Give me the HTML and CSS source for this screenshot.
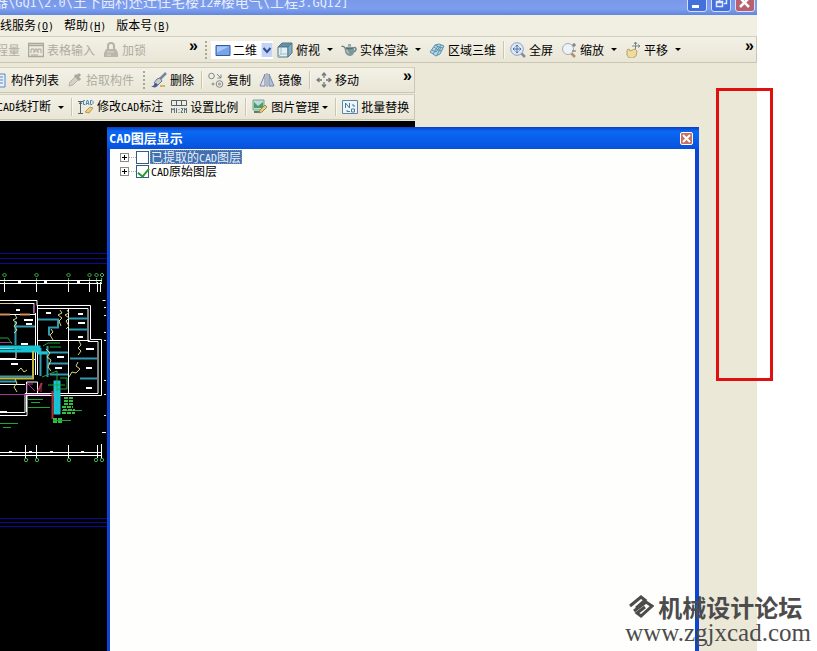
FILE: index.html
```html
<!DOCTYPE html>
<html lang="zh-CN">
<head>
<meta charset="utf-8">
<title>CAD图层显示</title>
<link rel="stylesheet" href="styles.css">
</head>
<body>
<main class="app">
  <header class="titlebar">
    <span class="title-text">器<span class="latin">\GQI\2.0\</span>王下园村还迁住宅楼<span class="latin">12#</span>楼电气<span class="latin">\</span>工程<span class="latin">3.GQI2]</span></span>
    <div class="win-buttons">
      <button class="win" aria-label="最小化"><svg width="18" height="18" viewBox="0 0 18 18"><path d="M4 12h7v3H4z" fill="#fff"/></svg></button>
      <button class="win" aria-label="还原"><svg width="18" height="18" viewBox="0 0 18 18" fill="none" stroke="#dfe8ff"><path d="M7.500 9V4.500h7v6H12M4.500 8.500h6v5h-6zM4 9.500h7" stroke-width="1.500"/></svg></button>
      <button class="win win-close" aria-label="关闭"><svg width="18" height="18" viewBox="0 0 18 18"><path d="M4 5l9 9M13 5l-9 9" stroke="#fff" stroke-width="2.500"/></svg></button>
    </div>
  </header>

  <nav class="menubar">
    <button>线服务<span class="latin">(<u>O</u>)</span></button>
    <button>帮助<span class="latin">(<u>H</u>)</span></button>
    <button>版本号<span class="latin">(<u>B</u>)</span></button>
  </nav>

  <div class="toolbar toolbar-main">
    <div class="group group-left">
      <button class="tool" disabled>程量</button>
      <button class="tool" disabled>
        <svg class="icon" viewBox="0 0 16 16" fill="none" stroke="#aaa89c"><path d="M.5 1.500h15v13H.5zM1 3.500h14" stroke-width="1.500"/><path d="M3 11V7h3v4M7 10V7h2v3M10 11V7h3v4M3 13h7"/></svg>表格输入</button>
      <button class="tool" disabled>
        <svg class="icon" viewBox="0 0 16 16"><path d="M5 7V4a3 3 0 0 1 6 0v3" fill="none" stroke="#b5b3a8" stroke-width="2"/><path d="M3 7h10l2 4v4H1v-4z" fill="#b9b7ab"/><path d="M4 10h7M4 13h4" stroke="#dedccf"/></svg>加锁</button>
      <button class="more" aria-label="更多">»</button>
    </div>
    <div class="group group-view">
      <span class="grip"></span>
      <label class="combo">
        <svg class="icon" viewBox="0 0 16 16"><path d="M1 3.500h14v10H1z" fill="#78a4e8" stroke="#315ba6"/><path d="M2 4.500h12l-12 6z" fill="#a9c9f5"/></svg>
        <select aria-label="视图模式"><option>二维</option><option>三维</option></select>
        <svg class="combo-arrow" viewBox="0 0 11 14"><path d="M0 0h11v14H0z" fill="#c3d3f7"/><path d="M2 5l3.500 4L9 5" fill="none" stroke="#304f8c" stroke-width="2"/></svg>
      </label>
      <button class="tool">
        <svg class="icon" viewBox="0 0 16 16" stroke="#51768a"><path d="M1 5l4-4h10l-4 4z" fill="#5f93ac"/><path d="M1 5h10v10H1z" fill="#e2eff3"/><path d="M11 5l4-4v10l-4 4z" fill="#86adbf"/><path d="M4 6v6h6M4 12l-3 3" fill="none" stroke="#a4bdc7"/></svg>俯视<i class="caret"></i></button>
      <button class="tool">
        <svg class="icon" viewBox="0 0 16 16"><path d="M1 5c0-1 2-1 3 1s1 3 3 4M12 6c4-2 4 3 0 4" fill="none" stroke="#6d8587" stroke-width="1.500"/><path d="M4 6c2-2 7-2 9 0 1 5-1 8-4 8s-6-3-5-8z" fill="#7e9899"/><path d="M5 6c2 1 5 1 7 0M7 3h3" stroke="#4c6466" fill="none"/><path d="M6 8c0 2 1 3 2 3" stroke="#d6e3e2" fill="none"/></svg>实体渲染<i class="caret"></i></button>
      <button class="tool">
        <svg class="icon" viewBox="0 0 16 16" stroke="#5c91ac"><path d="M1 10l5-7 4-1 5 2-4 8-4 2z" fill="#b7d8e5"/><path d="M3 8l4 2 5-7M6 3l4 2 4 1M4 12l5-8M8 13l4-8M5 5l4 3 4 1" fill="none"/></svg>区域三维</button>
      <span class="sep"></span>
      <button class="tool">
        <svg class="icon" viewBox="0 0 16 16"><path d="M11 11l4 4" stroke="#8c8a96" stroke-width="2.500"/><circle cx="7" cy="7" r="6.300" fill="#dfe9f6" stroke="#8c9fbb"/><path d="M7 3v8M3 7h8M5.500 4.500L7 3l1.500 1.500M5.500 9.500L7 11l1.500-1.500M4.500 5.500L3 7l1.500 1.500M9.500 5.500L11 7 9.500 8.500" fill="none" stroke="#4e6fa8"/></svg>全屏</button>
      <button class="tool">
        <svg class="icon" viewBox="0 0 16 16"><path d="M10 11l4 4" stroke="#b28e72" stroke-width="2.500"/><circle cx="7" cy="7" r="5.500" fill="#edf2f5" stroke="#a4adb7"/><path d="M11 3h4M13 1v4M11 9h4" stroke="#656b75"/></svg>缩放<i class="caret"></i></button>
      <button class="tool">
        <svg class="icon" viewBox="0 0 16 16"><path d="M10.500 0v8M7 4h8M9 2l1.500-2L12 2M13 2.500L15 4l-2 1.500" stroke="#7b8587" fill="none"/><path d="M2 8l2-1 1 2 5-2 2 2-1 5-3 2H4l-2-3z" fill="#eddc9b" stroke="#b5a46b"/></svg>平移<i class="caret"></i></button>
      <button class="more" aria-label="更多">»</button>
    </div>
  </div>

  <div class="dock">
    <div class="toolbar toolbar-edit">
      <button class="tool">
        <svg class="icon" viewBox="0 0 16 16"><path d="M2 2h11v13H2z" fill="#e6f0fb" stroke="#5d87bd"/><path d="M6 5h5M6 8h5M6 11h5" stroke="#5d87bd"/></svg>构件列表</button>
      <button class="tool" disabled>
        <svg class="icon" viewBox="0 0 16 16"><path d="M2 14l1-4 6-6 3 3-6 6z" fill="#d4d2c6" stroke="#b5b3a8"/><path d="M8 3l5 5M10 5l3-3" stroke="#a9a79b" stroke-width="3"/></svg>拾取构件</button>
      <span class="grip"></span>
      <button class="tool">
        <svg class="icon" viewBox="0 0 16 16"><path d="M15 1l-6 6" stroke="#76879a" stroke-width="2.500"/><path d="M9 6l2 3-4 4-4-2 3-4z" fill="#c6d0c8" stroke="#69759c"/><path d="M0 14c3 1 3-3 5-3l2 2c-1 3-5 3-7 1z" fill="#48599b"/><path d="M9 14h5" stroke="#d5b85e" stroke-width="2"/></svg>删除</button>
      <span class="sep"></span>
      <button class="tool">
        <svg class="icon" viewBox="0 0 16 16" fill="none" stroke="#85898c"><circle cx="3.500" cy="4" r="2.800"/><circle cx="11.500" cy="12" r="3.300"/><path d="M9 2l4 4M13 2.500V6H9.500"/><circle cx="11.500" cy="12" r="1"/><circle cx="5" cy="12" r="1"/></svg>复制</button>
      <button class="tool">
        <svg class="icon" viewBox="0 0 16 16" stroke="#7587aa"><path d="M6 2v12H1z" fill="#dbe3ed"/><path d="M10 2v12h5z" fill="#b3c2dc"/><path d="M8 1v14"/></svg>镜像</button>
      <span class="sep"></span>
      <button class="tool">
        <svg class="icon" viewBox="0 0 16 16" fill="none" stroke="#747780"><path d="M8 1v5M8 10v5M1 8h5M10 8h5M6 3.500L8 1l2 2.500M6 12.500L8 15l2-2.500M3.500 6L1 8l2.500 2M12.500 6L15 8l-2.500 2" stroke-width="1.300"/></svg>移动</button>
      <button class="more" aria-label="更多">»</button>
    </div>
    <div class="toolbar toolbar-cad">
      <button class="tool"><span><span class="latin">CAD</span>线打断</span><i class="caret"></i></button>
      <span class="sep"></span>
      <button class="tool">
        <svg class="icon" viewBox="0 0 16 16" fill="none"><path d="M0 2.500h5M2.500 3v11M0 14.500h5M1 5l1.500-2L4 5" stroke="#56616b"/><path d="M7 1.500H5.500v4H7M8 6l1-4.500h1L11 6M8.500 4.500h2M12.500 1.500v4H14l1-1v-2l-1-1z" stroke="#4c86b5"/><path d="M7 13l5-5 3 1-4 5z" fill="#f0cd83" stroke="#bd9957"/></svg><span>修改<span class="latin">CAD</span>标注</span></button>
      <button class="tool">
        <svg class="icon" viewBox="0 0 16 16" fill="none" stroke="#56616b"><path d="M.5 1.500h15v5H.5zM5.500 2v4M10.500 2v4"/><path d="M.5 14V9l1.500 2L3.500 9v5M5.500 9v5M8 10v1M8 13v1M10 9.500h2L10 13.500h2M13.500 14V9l1 2 1-2v5" stroke="#5c7486"/></svg>设置比例</button>
      <span class="sep"></span>
      <button class="tool">
        <svg class="icon" viewBox="0 0 16 16"><path d="M1 1h11v10H1z" fill="#b9dce1" stroke="#78a38d"/><path d="M2 3l4 4 5-4v6H2z" fill="#4d9b68"/><path d="M2 13h6" stroke="#4e8760" stroke-width="2"/><path d="M7 14l1-3 5-5 2 2-5 5z" fill="#e8cc70" stroke="#9d8953"/></svg>图片管理<i class="caret caret-tight"></i></button>
      <span class="sep"></span>
      <button class="tool">
        <svg class="icon" viewBox="0 0 16 16" fill="none"><path d="M.5 1.500h15v13H.5z" fill="#edf5fb" stroke="#5d86a4"/><path d="M3.500 9V4l4 5V4M5 11v1.500h3M9.500 10h3v3h-3zM10 6h2v2" stroke="#4b7b9e"/></svg>批量替换</button>
    </div>
  </div>

  <section class="workspace">
    <div class="canvas">
      <svg class="drawing" width="107" height="531" viewBox="0 120 107 531" fill="none" role="img" aria-label="电气平面图">
        <g stroke="#0a0a96"><path d="M0 252.500h107M0 257.500h107M0 262.500h107M0 517.500h107M0 521.500h107M0 525.500h107"/></g>
        <g stroke="#3fb64c"><path d="M4.500 277v14M36.500 277v14M68.500 277v14M89.500 277v14M96.500 277v6M101.500 277v6"/><path d="M4.500 272l2 2-2 2-2-2zM36.500 272l2 2-2 2-2-2zM68.500 272l2 2-2 2-2-2zM89.500 272l2 2-2 2-2-2zM96.500 272l2 2-2 2-2-2zM102 272l2 2-2 2-2-2z"/>
          <circle cx="26" cy="459" r="1.700"/><circle cx="37" cy="459" r="1.700"/><circle cx="69" cy="459" r="1.700"/><circle cx="96" cy="459" r="1.700"/><circle cx="102" cy="459" r="1.700"/></g>
        <g stroke="#fff"><path d="M0 279.500h102M0 282.500h102M4.500 281v10M36.500 281v10M68.500 281v10M89.500 281v10M97.500 281v10M100.500 281v10M102.500 299.500h3M104 306.500h2M104 314.500h2M104 331.500h2M104 339.500h2M104 379.500h2M104 393.500h2M104 414.500h2M102 431.500h4"/>
          <path d="M0 451.500h102M0 454.500h102M25.500 444v13M36.500 444v13M68.500 444v13M97.500 444v13M101.500 443v14"/>
          <path d="M0 299.500h37v5h53.500v34h11v56H27v20H0M0 302.500h34v10M37.500 307.500h50.500v33h10v52H25v19H0M37.500 305v69M35.500 312v62M0 313.500h35M0 347.500h16v10H0M0 358.500h36M37.500 339.500h52M68.500 308v85M37.500 393v-12h-11v30M0 383.500h25"/></g>
        <path d="M16 325.500h19M15.500 320v24M38 318.500h20v8h-9v8M69 317.500h19M69 328.500h19M0 375.500h34M0 380.500h16M38 351.500h30M48 362.500h20M47.500 345v31M50 373.500h18M70 357.500h27M80 377.500h17M40.500 347v28" stroke="#329ab4" stroke-width="2"/>
        <path d="M0 346h39v6h8M0 350h37M55 381h4v31h-4z" fill="#12bfd2" stroke="#17c4d4" stroke-width="3"/>
        <path d="M15 314l2 3-4 2 4 3-3 3 3 4-3 3M60 309l2 3-4 2 4 3-3 3 2 5M67 309l2 3-4 2 4 3-3 3 3 5-3 3M51 328l2 3-3 3 3 5M79 340l2 4-3 3 3 3-3 4M78 361l-2 4 4 3-4 4-4-1-3 5M15 378l2 4-3 4 3 5M18 370l3-3 3 4 3-2M46 348l4 4-3 4 4 3-3 7 3 4" stroke="#d5d77d"/>
        <path d="M0 377.500h33V350" stroke="#c3b83b" stroke-width="2"/>
        <path d="M34.500 302v10M0 341.500h12M27 382l8 8M27 391v-8h6M41 391V382M0 393.500h50" stroke="#a63798"/>
        <path d="M38 390l4-8M52.500 390v28" stroke="#b52b35" stroke-width="2"/>
        <path d="M43 345l5-3h12M50 346h11M0 337h8l4 6M42 376l15-6v20M60 377h7v11h-9M48 384h17M0 422.500h18M3 426.500h8M28 398.500h15M31 401.500h9M28 406.500h22M62 409.500h20M53 419.500h18" stroke="#1ba63a"/>
        <path d="M64 397h10M64 400h10M64 403h9M62 406h11M63 409h12M62 412h13M53 418h9M53 421h9" stroke="#36bd42" stroke-width="2" stroke-dasharray="4 1"/>
        <path d="M16 309h4M24 319h9M26 323h6M21 343h7M46 312h5M78 313h5M78 322h7M78 336h5M57 356h7M55 367h7M86 348h8M86 367h6M86 387h6M11 363h7M0 411h7M18 281h3M44 281h3M77 281h3M9 451h3M29 451h3M50 451h3M81 451h3" stroke="#fff" stroke-width="2"/>
        <path d="M0 302.500h14" stroke="#d4cf86"/>
        <path d="M0 313.500h10M20 313.500h10" stroke="#cf8f55" stroke-width="2"/>
      </svg>
    </div>
  </section>

  <section class="dialog" aria-label="CAD图层显示">
    <header class="dialog-title">
      <h1><span class="latin">CAD</span>图层显示</h1>
      <button class="dialog-close" aria-label="关闭"><svg width="9" height="9" viewBox="0 0 9 9"><path d="M1 1l7 7M8 1L1 8" stroke="#fff" stroke-width="2"/></svg></button>
    </header>
    <ul class="tree">
      <li><button class="expander" aria-label="展开"></button><span class="branch"></span><input type="checkbox" id="layer-picked"><label for="layer-picked" class="selected">已提取的<span class="latin">CAD</span>图层</label></li>
      <li><button class="expander" aria-label="展开"></button><span class="branch"></span><input type="checkbox" id="layer-source" checked><label for="layer-source"><span class="latin">CAD</span>原始图层</label></li>
    </ul>
  </section>
</main>

<div class="highlight"></div>
<div class="watermark">
  <div class="mark-name">
    <svg width="26" height="26" viewBox="0 0 26 26" fill="none" stroke="#4c4c4c" stroke-width="3"><path d="M2 12L13 3l4 3-9 8M6 17l12-9 6 4-11 10-4-3 8-6"/></svg>
    <span>机械设计论坛</span>
  </div>
  <div class="mark-url">www.zgjxcad.com</div>
</div>
</body>
</html>
```
FILE: styles.css
```css
* { box-sizing: border-box; }

body {
  margin: 0;
  min-height: 100vh;
  overflow: hidden;
  background: #fff;
  color: #000;
  font: 12px/14px "Noto Sans CJK SC", sans-serif;
}

button, select, input { font: inherit; color: inherit; margin: 0; }

button {
  border: 0;
  padding: 0;
  background: none;
  white-space: nowrap;
}

/* Half-width companion to the 12px ideographs */
.latin { font-family: "DejaVu Sans Mono", monospace; font-size: 10px; }

.app {
  position: relative;
  display: flex;
  flex-direction: column;
  height: 100vh;
  margin-right: 60px;
  background: #ebe8d8;
  overflow: hidden;
}

.titlebar {
  display: flex;
  justify-content: space-between;
  align-items: flex-end;
  height: 15px;
  flex: none;
  overflow: hidden;
  background: linear-gradient(#7a98e8, #7d9eee 60%, #6086dc);
  color: #e4edff;
}

.title-text {
  margin-left: -6px;
  padding-bottom: 4px;
  font-size: 14px;
  line-height: 16px;
  white-space: pre;
}

.title-text .latin { font-size: 12px; }

.win-buttons { display: flex; gap: 4px; padding: 0 2px 3px; }

.win {
  width: 20px;
  height: 20px;
  border: 1px solid #d4e0fb;
  border-radius: 3px;
  background: #4470dc;
}

.win svg { display: block; }
.win-close { background: #b9606c; }

.menubar {
  display: flex;
  align-items: center;
  gap: 10px;
  height: 21px;
  flex: none;
  background: #f1eee2;
}

.toolbar {
  display: flex;
  align-items: center;
  background: linear-gradient(#f3f1e6, #e9e6d6);
  border-top: 1px solid #d2cfbf;
  border-bottom: 1px solid #c9c6b5;
}

.toolbar-main { height: 27px; flex: none; }

.group { display: flex; align-items: center; height: 100%; min-width: 0; }
.group-left { width: 212px; margin-left: -8px; padding-right: 4px; flex: none; }
.group-view { flex: 1; border-right: 1px solid #c9c6b5; }

.dock {
  display: flex;
  flex-direction: column;
  gap: 1px;
  width: 415px;
  padding-top: 4px;
  flex: none;
}

.toolbar-edit, .toolbar-cad { height: 26px; border-right: 1px solid #c9c6b5; }
.toolbar-edit > :first-child { margin-left: -12px; }
.toolbar-cad > :first-child { margin-left: -7px; }

.tool {
  display: flex;
  align-items: center;
  gap: 3px;
  height: 22px;
  padding: 0 4px;
  flex: none;
}

.tool:disabled { color: #aeac9f; }
.icon { width: 16px; height: 16px; flex: none; }

.caret {
  margin-left: 4px;
  border: 3px solid transparent;
  border-top-color: #000;
  border-bottom: 0;
}

.caret-tight { margin-left: 0; }

.sep {
  width: 2px;
  height: 18px;
  margin: 0 1px 0 3px;
  border-left: 1px solid #c9c6b4;
  border-right: 1px solid #f8f6ed;
  flex: none;
}

.grip {
  width: 2px;
  height: 18px;
  margin: 0 2px 0 5px;
  background: repeating-linear-gradient(#a9a798 0 2px, transparent 2px 4px);
  flex: none;
}

.group-view .grip { margin: 0 4px 0 1px; }

.more {
  margin-left: auto;
  padding: 0 2px 8px;
  font: bold 16px/14px "Liberation Sans", sans-serif;
}

.combo {
  display: flex;
  align-items: center;
  gap: 1px;
  width: 62px;
  height: 18px;
  padding: 0 0 0 4px;
  background: #fff;
}

.combo select {
  appearance: none;
  width: 28px;
  padding: 0 0 0 1px;
  border: 0;
  background: none;
}

.combo-arrow { width: 12px; height: 14px; flex: none; pointer-events: none; }

.workspace { flex: 1; min-height: 0; margin-top: 1px; }

.canvas {
  width: 415px;
  height: 100%;
  background: #000;
  overflow: hidden;
}

.drawing { display: block; }

.dialog {
  position: absolute;
  top: 127px;
  bottom: 0;
  left: 107px;
  right: 58px;
  display: flex;
  flex-direction: column;
  border: solid #0c45d4;
  border-width: 0 4px 0 3px;
  background: #fefffd;
}

.dialog-title {
  display: flex;
  align-items: center;
  justify-content: space-between;
  height: 22px;
  margin: 0 -4px 0 -3px;
  padding: 1px 6px 0 2px;
  background: linear-gradient(#0a3fc0, #0a68f4 20%, #0758e4 80%, #0a50d8);
  color: #fff;
}

.dialog-title h1 { margin: 0; font-size: 13px; line-height: 14px; font-weight: bold; }
.dialog-title .latin { font-size: 12px; }

.dialog-close {
  display: flex;
  align-items: center;
  justify-content: center;
  width: 13px;
  height: 13px;
  border: 1px solid #fff;
  border-radius: 2px;
  background: #c77360;
}

.tree { margin: 0; padding: 1px 0 0 10px; list-style: none; }
.tree li { display: flex; align-items: center; height: 14px; }

.expander {
  width: 9px;
  height: 9px;
  border: 1px solid #8b8b8b;
  background:
    linear-gradient(#000, #000) center / 5px 1px no-repeat,
    linear-gradient(#000, #000) center / 1px 5px no-repeat,
    #fff;
}

.branch { width: 7px; border-top: 1px dotted #a9a9a9; }

.tree input {
  position: relative;
  appearance: none;
  width: 13px;
  height: 13px;
  border: 1px solid #355d83;
  background: #fff;
}

.tree input:checked::after {
  content: "";
  position: absolute;
  top: 0;
  left: 3px;
  width: 5px;
  height: 9px;
  border: solid #2b9a35;
  border-width: 0 2px 2px 0;
  transform: rotate(40deg);
}

.tree label { margin-left: 1px; padding: 0 1px; height: 14px; }
.tree .selected { background: #426fae; color: #e9f2ff; outline: 1px dotted #7d92ad; outline-offset: -1px; }

.highlight {
  position: absolute;
  top: 88px;
  left: 716px;
  width: 57px;
  height: 293px;
  border: 3px solid #e0100e;
}

.watermark {
  position: absolute;
  right: 6px;
  bottom: 6px;
  color: #4c4c4c;
}

.mark-name {
  display: flex;
  align-items: center;
  gap: 4px;
  padding-left: 3px;
  font: bold 24px/28px "Noto Sans CJK SC", sans-serif;
}

.mark-name svg { display: block; }

.mark-url { font: 25px/24px "Liberation Serif", serif; }
```
